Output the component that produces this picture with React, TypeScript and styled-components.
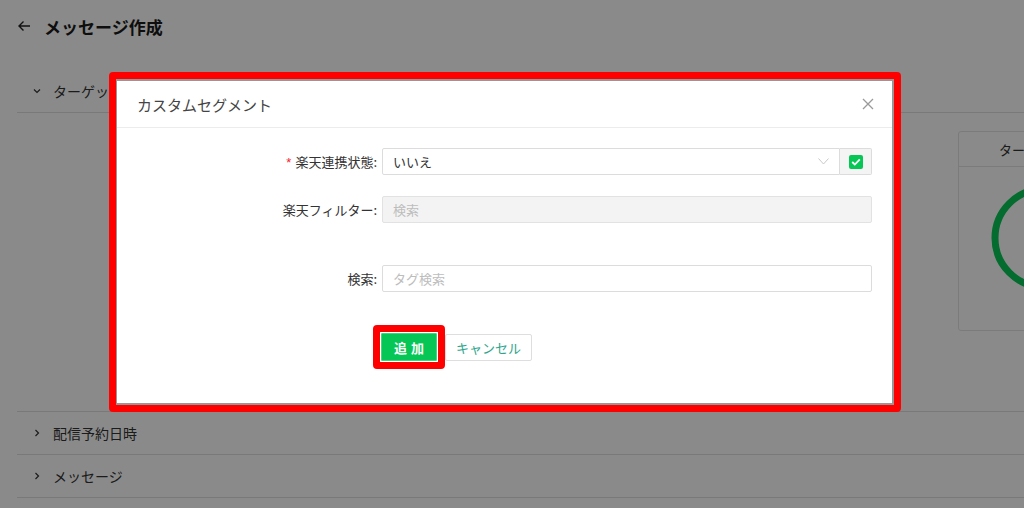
import React from "react";
import styled, { createGlobalStyle } from "styled-components";

const Global = createGlobalStyle`
  html, body { margin: 0; padding: 0; background: #fff; }
  body {
    font-family: "Noto Sans CJK JP", "Noto Sans", "Liberation Sans", sans-serif;
    width: 1024px; height: 508px; overflow: hidden;
  }
  * { box-sizing: border-box; }
`;

const Page = styled.div`
  width: 1024px;
  height: 508px;
  overflow: hidden;
  color: #222;
`;

const Header = styled.div`
  height: 52px;
  display: flex;
  align-items: center;
  padding-left: 17px;
  gap: 13px;
`;

const BackIcon = styled.svg`
  width: 14px;
  height: 14px;
`;

const Title = styled.h1`
  margin: 0;
  font-size: 17px;
  font-weight: 700;
  color: #1a1a1a;
`;

const Sections = styled.div`
  margin-top: 18px;
  margin-left: 17px;
`;

const SectionRow = styled.div`
  height: 43px;
  display: flex;
  align-items: center;
  gap: 12px;
  padding-left: 16px;
  border-bottom: 1px solid #e0e0e0;
  font-size: 14px;
  color: #333;
`;

const Chevron = styled.svg`
  width: 8px;
  height: 8px;
`;

const Expanded = styled.div`
  height: 299px;
  display: grid;
  grid-template-columns: 1fr 66px;
  padding-top: 18px;
  border-bottom: 1px solid #e0e0e0;
  overflow: hidden;
`;

const Card = styled.div`
  width: 240px;
  height: 200px;
  border: 1px solid #e4e4e4;
  border-radius: 3px;
  display: flex;
  flex-direction: column;
`;

const CardHead = styled.div`
  height: 35px;
  border-bottom: 1px solid #e4e4e4;
  display: flex;
  align-items: center;
  padding-left: 40px;
  font-size: 13px;
  color: #333;
  white-space: nowrap;
`;

const CardBody = styled.div`
  flex: 1;
  display: flex;
  align-items: flex-start;
  padding: 16px 0 0 30px;
`;

const Overlay = styled.div`
  position: fixed;
  inset: 0;
  background: rgba(0, 0, 0, 0.46);
  padding: 72px 0 0 109px;
`;

const Annotation = styled.div`
  border: 7px solid #ff0000;
  border-radius: 4px;
  padding: 2px 2px 2px 1px;
  background: #979797;
  width: 792px;
  height: 340px;
`;

const Modal = styled.div`
  background: #fff;
  height: 100%;
  display: flex;
  flex-direction: column;
`;

const ModalHeader = styled.div`
  height: 47px;
  border-bottom: 1px solid #ececec;
  display: flex;
  align-items: center;
  justify-content: space-between;
  padding: 0 18px 0 20px;
`;

const ModalTitle = styled.div`
  font-size: 15px;
  color: #444;
`;

const CloseIcon = styled.svg`
  width: 12px;
  height: 12px;
`;

const ModalBody = styled.div`
  padding: 20px 20px 0 0;
  display: flex;
  flex-direction: column;
`;

const FormRow = styled.div<{ $after: number }>`
  display: grid;
  grid-template-columns: 260px 1fr;
  column-gap: 5px;
  align-items: center;
  margin-bottom: ${(p) => p.$after}px;
`;

const Label = styled.label`
  text-align: right;
  font-size: 13px;
  color: #333;
  white-space: nowrap;
`;

const Required = styled.span`
  color: #f5222d;
  margin-right: 4px;
  font-family: "Liberation Sans", sans-serif;
`;

const FieldGroup = styled.div`
  display: flex;
  height: 27px;
`;

const Select = styled.div`
  flex: 1;
  border: 1px solid #dcdcdc;
  border-radius: 2px 0 0 2px;
  display: flex;
  align-items: center;
  justify-content: space-between;
  padding: 0 10px 0 10px;
  font-size: 13px;
  color: #333;
`;

const Addon = styled.div`
  width: 32px;
  border: 1px solid #dcdcdc;
  border-left: none;
  background: #f4f4f4;
  border-radius: 0 2px 2px 0;
  display: flex;
  align-items: center;
  justify-content: center;
`;

const CheckBox = styled.span`
  width: 14px;
  height: 14px;
  border-radius: 2px;
  background: #06c755;
  display: flex;
  align-items: center;
  justify-content: center;
`;

const Input = styled.div<{ $disabled?: boolean }>`
  height: 27px;
  border: 1px solid ${(p) => (p.$disabled ? "#e2e2e2" : "#dcdcdc")};
  background: ${(p) => (p.$disabled ? "#f3f3f3" : "#fff")};
  border-radius: 2px;
  display: flex;
  align-items: center;
  padding-left: 10px;
  font-size: 13px;
  color: #bdbdbd;
`;

const ButtonRow = styled.div`
  display: flex;
  align-items: center;
  padding-left: 256px;
`;

const Highlight = styled.div`
  border: 7px solid #ff0000;
  border-radius: 4px;
  padding: 1px;
`;

const PrimaryButton = styled.button`
  width: 56px;
  height: 28px;
  border: 1px solid #3fd882;
  background: #06c755;
  color: #fff;
  font-size: 13px;
  font-weight: 700;
  letter-spacing: 4px;
  padding: 0 0 0 4px;
  border-radius: 1px;
  font-family: inherit;
`;

const DefaultButton = styled.button`
  width: 87px;
  height: 27px;
  border: 1px solid #dedede;
  background: #fff;
  color: #2fa58c;
  font-size: 13px;
  border-radius: 2px;
  font-family: inherit;
  padding: 0;
`;

export default function App() {
  return (
    <>
      <Global />
      <Page>
        <Header>
          <BackIcon viewBox="0 0 14 14">
            <path d="M13 7H2M6.5 2.5L2 7l4.5 4.5" fill="none" stroke="#222" strokeWidth="1.4" />
          </BackIcon>
          <Title>メッセージ作成</Title>
        </Header>
        <Sections>
          <SectionRow>
            <Chevron viewBox="0 0 8 8">
              <path d="M1 2.5l3 3 3-3" fill="none" stroke="#333" strokeWidth="1.2" />
            </Chevron>
            ターゲット
          </SectionRow>
          <Expanded>
            <div />
            <Card>
              <CardHead>ター</CardHead>
              <CardBody>
                <svg width="110" height="110" viewBox="0 0 110 110">
                  <circle cx="55" cy="55" r="49" fill="none" stroke="#06c755" strokeWidth="7" />
                </svg>
              </CardBody>
            </Card>
          </Expanded>
          <SectionRow>
            <Chevron viewBox="0 0 8 8">
              <path d="M2.5 1l3 3-3 3" fill="none" stroke="#333" strokeWidth="1.2" />
            </Chevron>
            配信予約日時
          </SectionRow>
          <SectionRow>
            <Chevron viewBox="0 0 8 8">
              <path d="M2.5 1l3 3-3 3" fill="none" stroke="#333" strokeWidth="1.2" />
            </Chevron>
            メッセージ
          </SectionRow>
        </Sections>
      </Page>
      <Overlay>
        <Annotation>
          <Modal>
            <ModalHeader>
              <ModalTitle>カスタムセグメント</ModalTitle>
              <CloseIcon viewBox="0 0 12 12">
                <path d="M1 1l10 10M11 1L1 11" stroke="#9a9a9a" strokeWidth="1.3" />
              </CloseIcon>
            </ModalHeader>
            <ModalBody>
              <FormRow $after={21}>
                <Label>
                  <Required>*</Required>楽天連携状態:
                </Label>
                <FieldGroup>
                  <Select>
                    <span>いいえ</span>
                    <svg width="11" height="7" viewBox="0 0 11 7">
                      <path d="M0.5 0.5l5 5.5 5-5.5" fill="none" stroke="#c8c8c8" strokeWidth="1" />
                    </svg>
                  </Select>
                  <Addon>
                    <CheckBox>
                      <svg width="10" height="8" viewBox="0 0 10 8">
                        <path d="M1.2 4l2.6 2.5L8.8 1.3" fill="none" stroke="#fff" strokeWidth="1.8" />
                      </svg>
                    </CheckBox>
                  </Addon>
                </FieldGroup>
              </FormRow>
              <FormRow $after={42}>
                <Label>楽天フィルター:</Label>
                <Input $disabled>検索</Input>
              </FormRow>
              <FormRow $after={33}>
                <Label>検索:</Label>
                <Input>タグ検索</Input>
              </FormRow>
              <ButtonRow>
                <Highlight>
                  <PrimaryButton>追加</PrimaryButton>
                </Highlight>
                <DefaultButton>キャンセル</DefaultButton>
              </ButtonRow>
            </ModalBody>
          </Modal>
        </Annotation>
      </Overlay>
    </>
  );
}
